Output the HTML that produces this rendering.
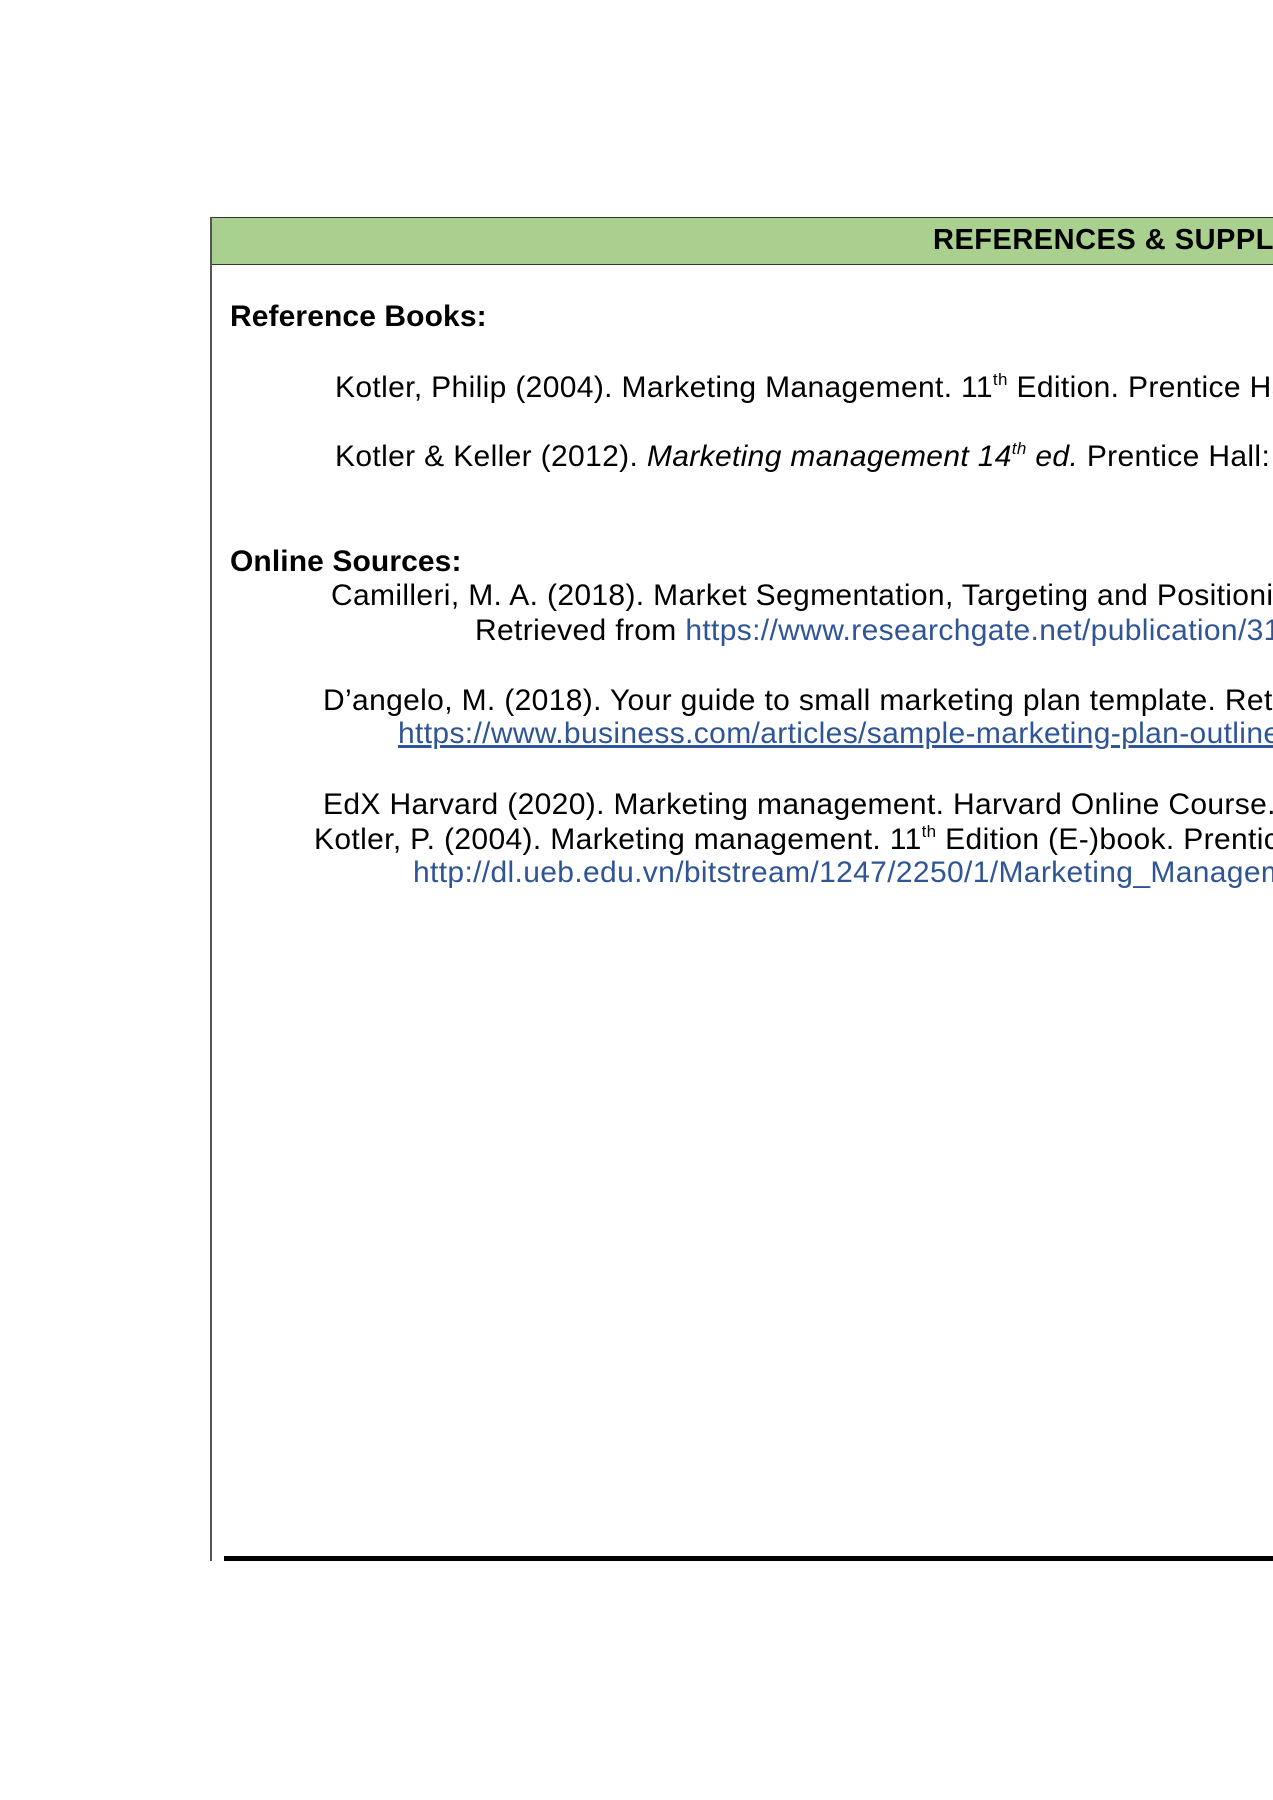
<!DOCTYPE html>
<html><head><meta charset="utf-8"><style>
html,body{margin:0;padding:0;background:#fff;width:1273px;height:1800px;overflow:hidden;font-family:"Liberation Sans",Arial,sans-serif;color:#000}
#w{position:relative;width:1273px;height:1800px;overflow:hidden}
.t{position:absolute;white-space:nowrap;font-size:30px;line-height:1;letter-spacing:0.35px}
.b{font-weight:bold;letter-spacing:0.1px}
.l{color:#2f5597}
.u{text-decoration:underline}
sup{font-size:17px;vertical-align:0;position:relative;top:-12px}
</style></head><body><div id="w">
<div style="position:absolute;left:210px;top:217px;width:1063px;height:46px;background:#a9d08e;border-top:1.5px solid #333;border-bottom:1.5px solid #333;border-left:1.5px solid #333"></div>
<div style="position:absolute;left:210px;top:217px;width:1.5px;height:1344px;background:#555"></div>
<div style="position:absolute;left:224px;top:1556px;width:1049px;height:5px;background:#000"></div>
<div class="t b" style="left:933px;top:226px;font-size:29px;letter-spacing:0.5px">REFERENCES &amp; SUPPLEMENTARY</div>
<div class="t b" style="left:230px;top:302px">Reference Books:</div>
<div class="t" style="left:335px;top:373px">Kotler, Philip (2004). Marketing Management. 11<sup>th</sup> Edition. Prentice Hall</div>
<div class="t" style="left:335px;top:442px">Kotler &amp; Keller (2012). <i>Marketing management 14<sup>th</sup> ed.</i> Prentice Hall: Upper</div>
<div class="t b" style="left:230px;top:547px">Online Sources:</div>
<div class="t" style="left:331px;top:581px">Camilleri, M. A. (2018). Market Segmentation, Targeting and Positioning</div>
<div class="t" style="left:475px;top:616px">Retrieved from <span class="l">https://www.researchgate.net/publication/319</span></div>
<div class="t" style="left:323px;top:686px">D’angelo, M. (2018). Your guide to small marketing plan template. Retrieved</div>
<div class="t l u" style="left:398px;top:719px">https://www.business.com/articles/sample-marketing-plan-outline-</div>
<div class="t" style="left:323px;top:790px">EdX Harvard (2020). Marketing management. Harvard Online Course. R</div>
<div class="t" style="left:314px;top:825px">Kotler, P. (2004). Marketing management. 11<sup>th</sup> Edition (E-)book. Prentice</div>
<div class="t l" style="left:413px;top:858px">http://dl.ueb.edu.vn/bitstream/1247/2250/1/Marketing_Management</div>
</div></body></html>
